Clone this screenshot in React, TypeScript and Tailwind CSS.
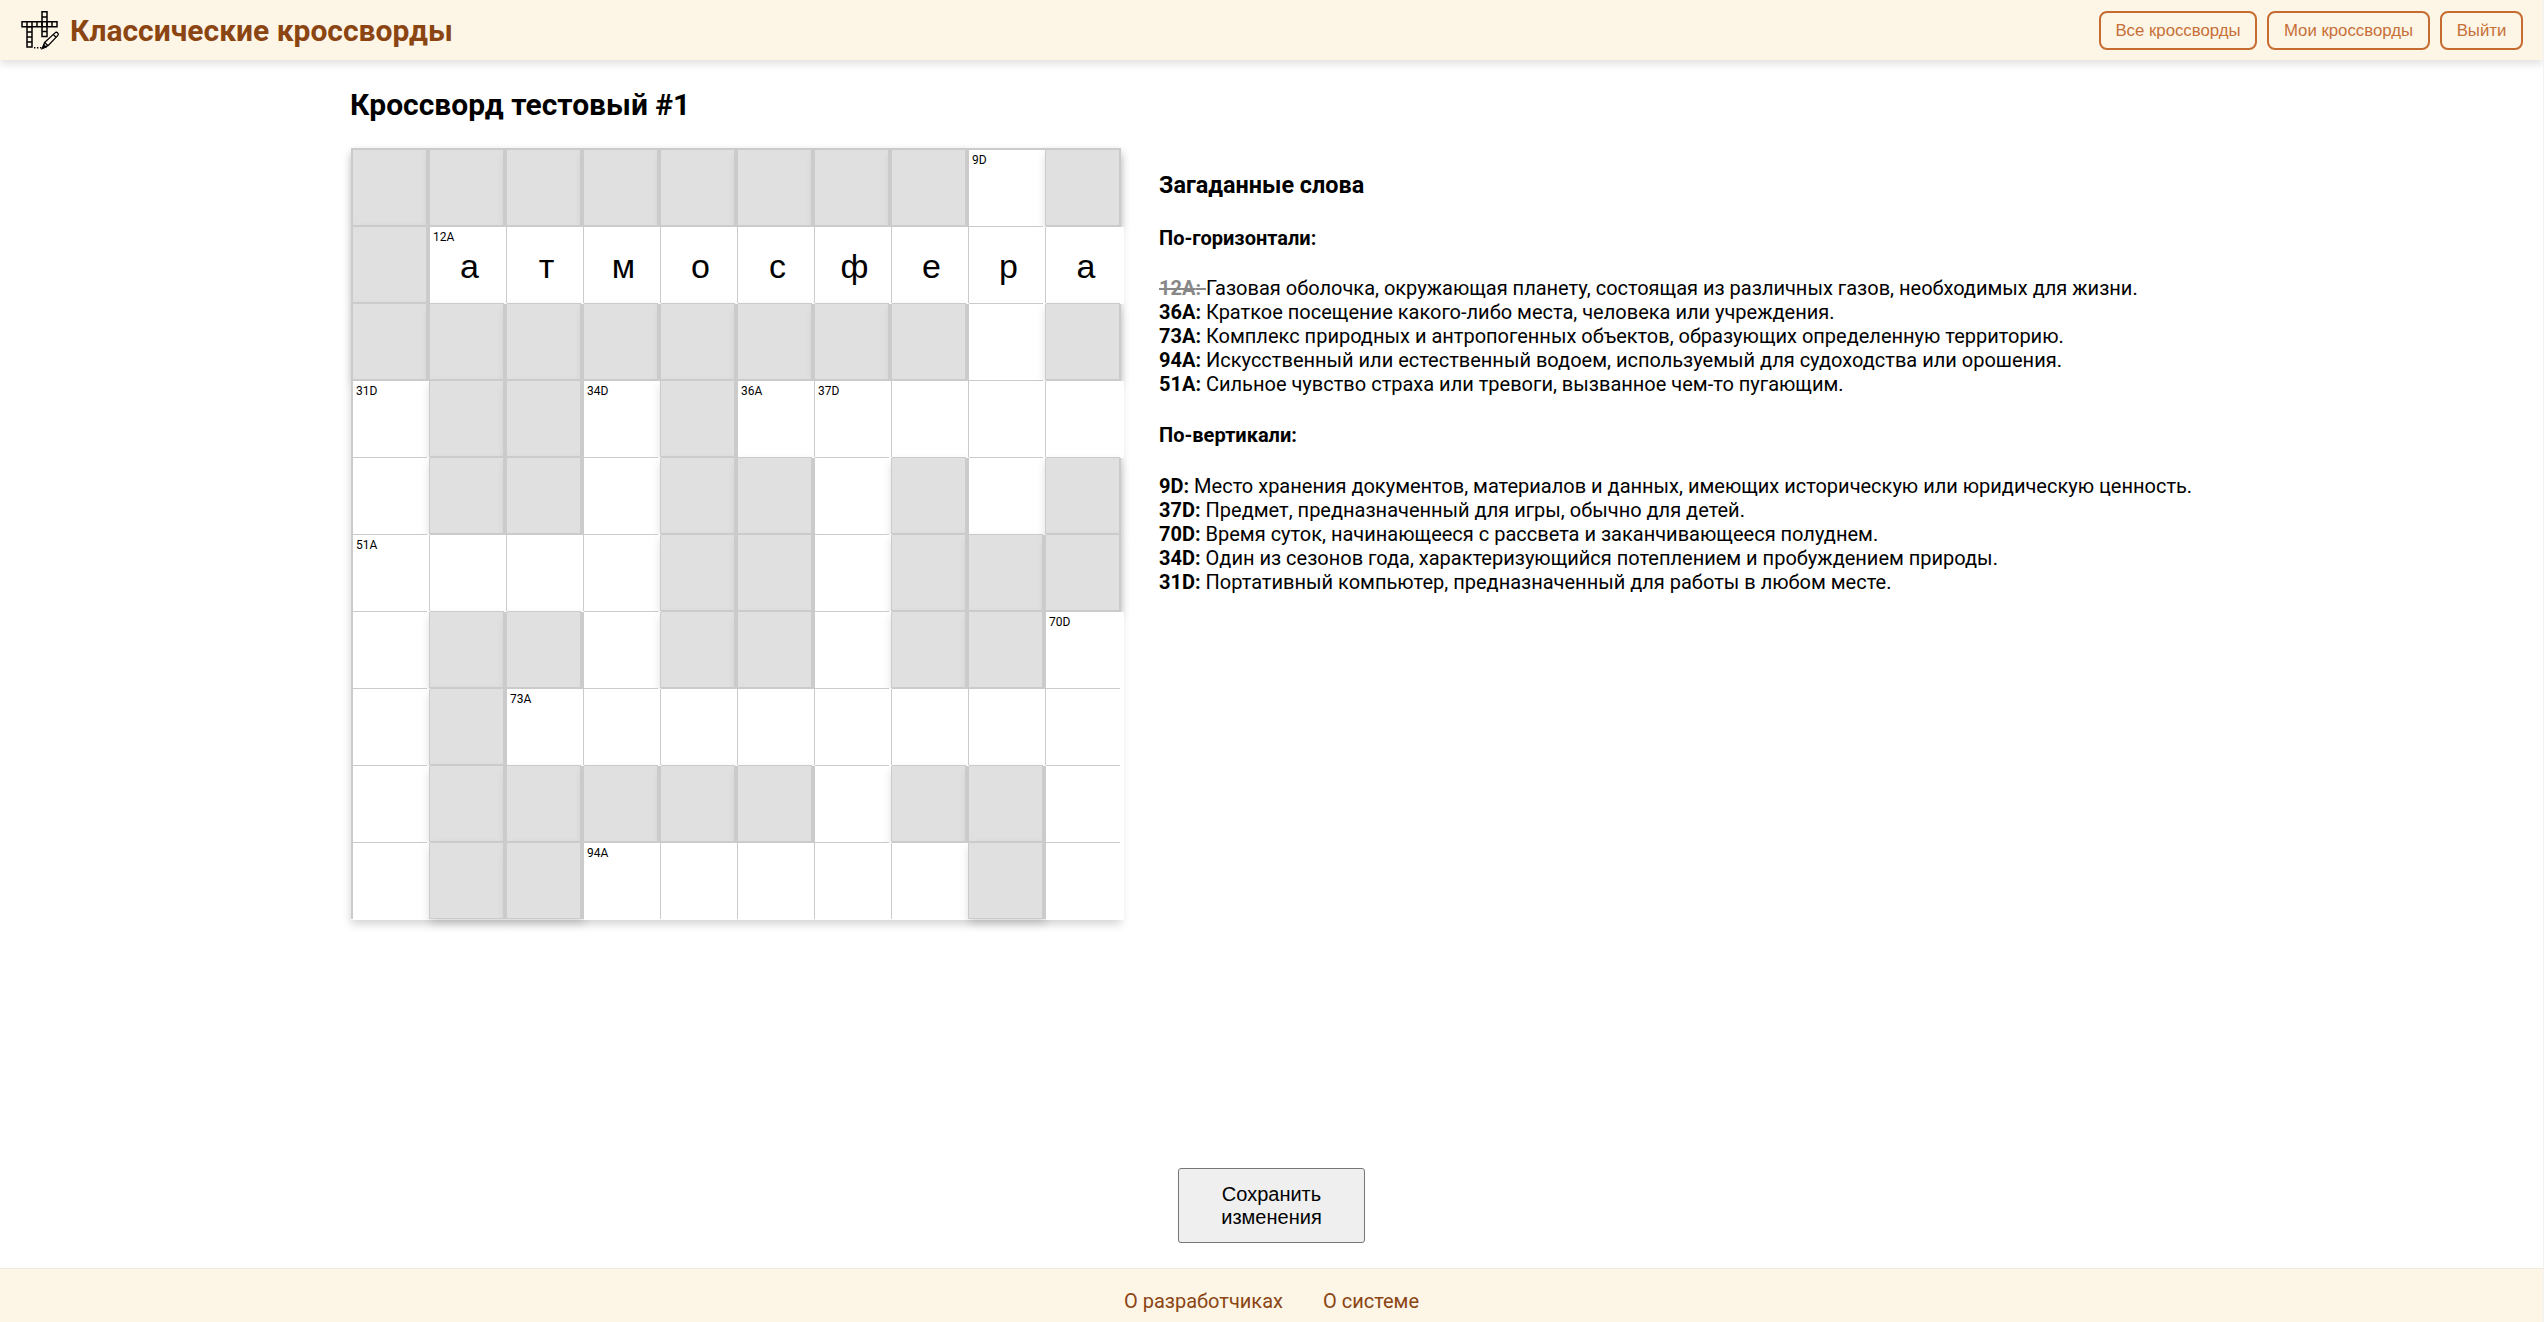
const ROWS = [
  '########.#',
  '#.........',
  '########.#',
  '.##.#.....',
  '.##.##.#.#',
  '....##.###',
  '.##.##.##.',
  '.#........',
  '.#####.##.',
  '.##.....#.',
];

const LABELS: Record<string, string> = {
  '0-8': '9D', '1-1': '12A', '3-0': '31D', '3-3': '34D', '3-5': '36A',
  '3-6': '37D', '5-0': '51A', '6-9': '70D', '7-2': '73A', '9-3': '94A',
};

const LETTERS = ' атмосфера';

const ACROSS = [
  { id: '12A', text: 'Газовая оболочка, окружающая планету, состоящая из различных газов, необходимых для жизни.', done: true },
  { id: '36A', text: 'Краткое посещение какого-либо места, человека или учреждения.' },
  { id: '73A', text: 'Комплекс природных и антропогенных объектов, образующих определенную территорию.' },
  { id: '94A', text: 'Искусственный или естественный водоем, используемый для судоходства или орошения.' },
  { id: '51A', text: 'Сильное чувство страха или тревоги, вызванное чем-то пугающим.' },
];

const DOWN = [
  { id: '9D', text: 'Место хранения документов, материалов и данных, имеющих историческую или юридическую ценность.' },
  { id: '37D', text: 'Предмет, предназначенный для игры, обычно для детей.' },
  { id: '70D', text: 'Время суток, начинающееся с рассвета и заканчивающееся полуднем.' },
  { id: '34D', text: 'Один из сезонов года, характеризующийся потеплением и пробуждением природы.' },
  { id: '31D', text: 'Портативный компьютер, предназначенный для работы в любом месте.' },
];

function Logo() {
  return (
    <svg className="h-10 w-10" viewBox="0 0 40 40" fill="none" stroke="#000" strokeWidth="1.5">
      <path d="M2 11.8h35v5H2zM7 11.8v5M12 11.8v5M17 11.8v5M22 11.8v5M27 11.8v5M32 11.8v5" />
      <path d="M22 1.8h5v24.7h-5zM22 7h5M22 21.5h5" />
      <path d="M7 16.8h5V37H7zM7 22h5M7 27h5M7 32h5" />
      <path d="M24.6 32.4 35 22.9a1.9 1.9 0 0 1 2.7 2.7L28 35.7 22.8 38zM24.6 32.4l3.4 3.3M33.4 24.6l2.6 2.6" strokeWidth="1.3" />
      <path d="M14 37.7h1.4M17 37.7h1.4M20 37.7h1.4" />
      <path d="m22.3 38.4 1.6-3.4 1.9 1.9z" fill="#000" />
    </svg>
  );
}

function NavButton({ children, width }: { children: string; width: string }) {
  return (
    <button
      className={`h-[39px] rounded-lg border-2 border-[#c66c30] ${width} font-['Liberation_Sans',sans-serif] text-[16.8px] leading-[19px] whitespace-nowrap text-[#c67038]`}
    >
      {children}
    </button>
  );
}

function Cell({ row, col, blocked }: { row: number; col: number; blocked: boolean }) {
  const lastCol = col === 9;
  const lastRow = row === 9;
  if (blocked) {
    return (
      <div
        className={`relative bg-[#e0e0e0] shadow-[0_4px_9px_rgba(0,0,0,0.16)] ${lastCol ? 'w-[75px]' : 'w-[77px]'} ${lastRow ? 'h-[76px]' : 'h-[77px]'}`}
      >
        <div className={`absolute top-0 right-0 z-10 h-full bg-[#cbcbcb] ${lastCol ? 'w-[2px]' : 'w-1'}`} />
        <div className={`absolute bottom-0 left-0 z-10 w-full bg-[#cbcbcb] ${lastRow ? 'h-px' : 'h-[2px]'}`} />
      </div>
    );
  }
  const label = LABELS[`${row}-${col}`];
  return (
    <div className={`relative h-[77px] bg-white ${lastCol ? 'w-[78px]' : 'w-[77px]'}`}>
      {!lastCol && <div className="absolute top-0 right-0 z-10 h-[76px] w-px bg-[#cbcbcb]" />}
      {!lastRow && <div className="absolute bottom-0 left-0 z-10 h-px w-[74px] bg-[#cbcbcb]" />}
      {label && <span className="absolute top-[3px] left-[3px] text-xs leading-[14px]">{label}</span>}
      {row === 1 && (
        <div className="flex h-full items-center justify-center pl-[2px] font-['Liberation_Sans',sans-serif] text-[34px] leading-none">
          {LETTERS[col]}
        </div>
      )}
    </div>
  );
}

function Board() {
  return (
    <div className="relative h-[772px] w-[770px] shrink-0 pt-[2px] pl-[2px] shadow-[0_4px_9px_rgba(0,0,0,0.18)]">
      <div className="absolute top-0 left-0 z-10 h-[2px] w-full bg-[#cbcbcb]" />
      <div className="absolute top-0 left-0 z-10 h-[771px] w-[2px] bg-[#cbcbcb]" />
      <div className="grid grid-cols-[repeat(10,77px)] grid-rows-[repeat(10,77px)]">
        {ROWS.flatMap((line, r) =>
          line.split('').map((ch, c) => <Cell key={`${r}-${c}`} row={r} col={c} blocked={ch === '#'} />),
        )}
      </div>
    </div>
  );
}

function Clues({ items }: { items: { id: string; text: string; done?: boolean }[] }) {
  return (
    <ul>
      {items.map((item) => (
        <li key={item.id} className="whitespace-nowrap">
          <span className={item.done ? 'font-bold text-[#888888] line-through' : 'font-bold'}>{item.id}: </span>
          {item.text}
        </li>
      ))}
    </ul>
  );
}

export default function App() {
  return (
    <div className="flex h-[1322px] flex-col overflow-hidden border-r border-[#f2f2f2] bg-white font-[Roboto,sans-serif] text-xl leading-6 text-black">
      <header className="flex h-[60px] shrink-0 items-center justify-between bg-[#fdf5e6] px-5 shadow-[0_4px_8px_rgba(0,0,0,0.12)]">
        <div className="flex items-center">
          <Logo />
          <span className="ml-2.5 text-[30px] leading-[35px] font-bold text-[#8b4513]">Классические кроссворды</span>
        </div>
        <nav className="flex gap-2.5">
          <NavButton width="w-[158px]">Все кроссворды</NavButton>
          <NavButton width="w-[163px]">Мои кроссворды</NavButton>
          <NavButton width="w-[83px]">Выйти</NavButton>
        </nav>
      </header>

      <main className="flex grow flex-col pt-[27px]">
        <h2 className="ml-[350px] text-[30px] leading-[35px] font-bold">Кроссворд тестовый #1</h2>
        <div className="mt-[26px] ml-[351px] flex">
          <Board />
          <section className="ml-[38px] pt-6">
            <h3 className="text-[23.4px] leading-[27px] font-bold">Загаданные слова</h3>
            <h4 className="mt-[27px] mb-[26px] font-bold">По-горизонтали:</h4>
            <Clues items={ACROSS} />
            <h4 className="my-[27px] font-bold">По-вертикали:</h4>
            <Clues items={DOWN} />
          </section>
        </div>
        <button className="mx-auto mt-[248px] h-[75px] w-[187px] rounded-[3px] border border-[#767676] bg-[#efefef] px-8 font-['Liberation_Sans',sans-serif] text-xl leading-[23px]">
          Сохранить изменения
        </button>
      </main>

      <footer className="flex h-[54px] shrink-0 justify-center gap-10 border-t border-[#eeeae2] bg-[#fdf5e6] pt-5 text-[#8b4513]">
        <span>О разработчиках</span>
        <span>О системе</span>
      </footer>
    </div>
  );
}
